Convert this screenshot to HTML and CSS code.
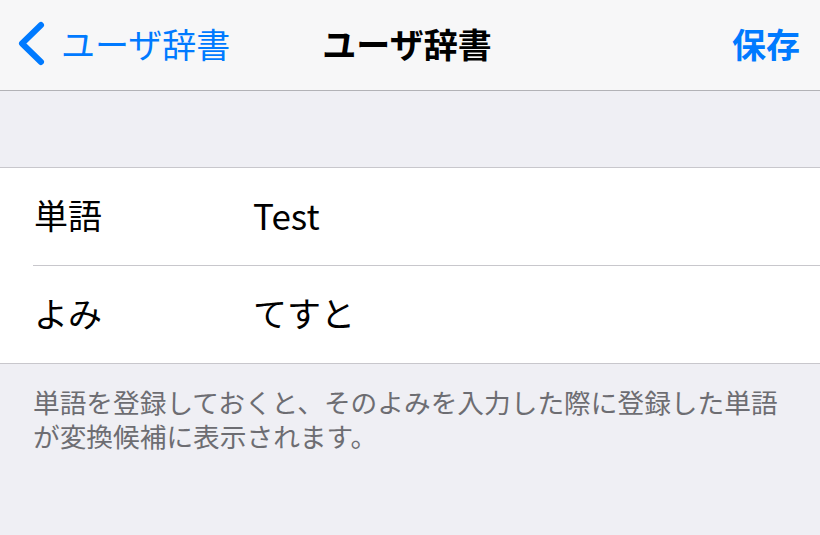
FILE: index.html
```html
<!DOCTYPE html>
<html lang="ja">
<head>
<meta charset="utf-8">
<link rel="stylesheet" href="styles.css">
</head>
<body>
<div class="screen">
  <header class="navbar">
    <div class="nav-left">
      <svg class="chevron" width="32" height="50" viewBox="0 0 32 50">
        <path d="M27 7 L8 25.5 L27 44" fill="none" stroke="#007aff" stroke-width="6" stroke-linecap="round" stroke-linejoin="round"/>
      </svg>
      <span class="back-text">ユーザ辞書</span>
    </div>
    <div class="nav-title">ユーザ辞書</div>
    <div class="nav-right"><span class="save">保存</span></div>
  </header>
  <div class="spacer"></div>
  <section class="group">
    <div class="row">
      <span class="label">単語</span>
      <span class="value latin">Test</span>
    </div>
    <div class="row">
      <span class="label">よみ</span>
      <span class="value">てすと</span>
    </div>
  </section>
  <p class="footer">単語を登録しておくと、そのよみを入力した際に登録した単語が変換候補に表示されます。</p>
</div>
</body>
</html>
```
FILE: styles.css
```css
* { box-sizing: border-box; }
html, body {
  margin: 0;
  padding: 0;
  background: #efeff4;
}
body {
  font-family: "Noto Sans CJK JP", "Noto Sans", sans-serif;
  width: 820px;
  height: 535px;
  overflow: hidden;
}
.screen {
  width: 820px;
  height: 535px;
  display: flex;
  flex-direction: column;
  background: #efeff4;
}
.navbar {
  height: 91px;
  background: #f7f7f8;
  border-bottom: 1px solid #b2b2b6;
  display: grid;
  grid-template-columns: 1fr auto 1fr;
  align-items: center;
  padding: 0 20px 2px 14px;
  flex-shrink: 0;
}
.nav-left {
  display: flex;
  align-items: center;
  color: #007aff;
}
.chevron {
  display: block;
  margin-top: -2px;
}
.back-text {
  font-size: 34px;
  line-height: 40px;
  margin-left: 15px;
  color: #007aff;
}
.nav-title {
  font-size: 34px;
  font-weight: 700;
  line-height: 40px;
  color: #000;
  text-align: center;
}
.nav-right {
  display: flex;
  justify-content: flex-end;
}
.save {
  font-size: 34px;
  font-weight: 700;
  line-height: 40px;
  color: #007aff;
}
.spacer {
  height: 76px;
  flex-shrink: 0;
}
.group {
  background: #fff;
  border-top: 1px solid #c8c7cc;
  border-bottom: 1px solid #c8c7cc;
  padding-left: 33px;
  flex-shrink: 0;
}
.row {
  height: 97px;
  display: flex;
  align-items: center;
  font-size: 34px;
  color: #000;
  padding-bottom: 4px;
}
.row + .row {
  border-top: 1px solid #c8c7cc;
  height: 98px;
}
.label {
  width: 220px;
  padding-left: 1px;
}
.value {
  flex: 1;
}
.latin {
  font-size: 35px;
}
.footer {
  margin: 0;
  padding: 21px 20px 0 33px;
  font-size: 26.7px;
  line-height: 34px;
  color: #6d6d72;
}
```
